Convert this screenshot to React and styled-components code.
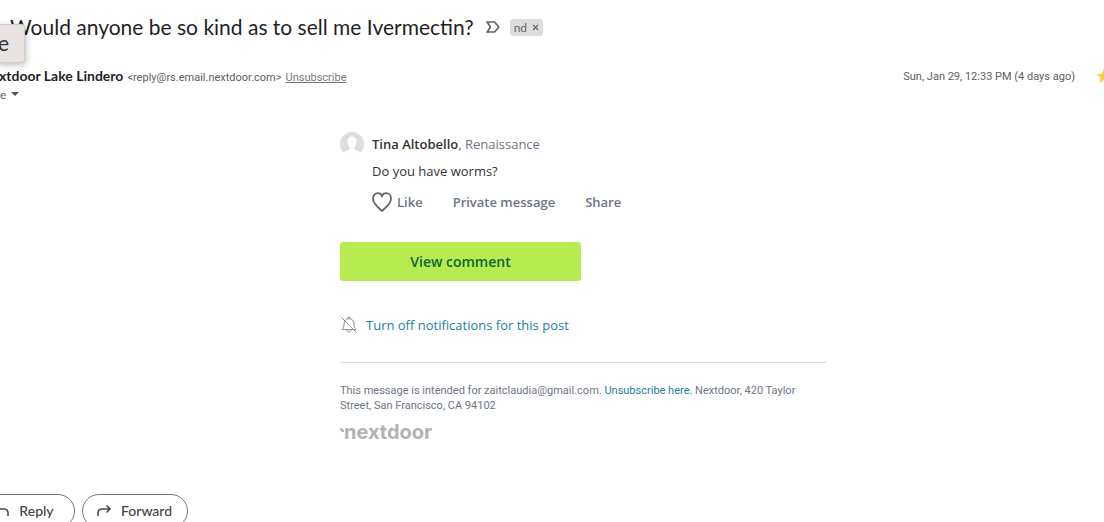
import styled, { createGlobalStyle } from 'styled-components'

const App = () => {
  return (
    <>
      <GlobalStyle />
      <Page>
        <Tooltip role="tooltip">e</Tooltip>
        <SubjectRow>
          <Subject>Would anyone be so kind as to sell me Ivermectin?</Subject>
          <ImportantMarker aria-label="Important">
            <svg width="14" height="12" viewBox="0 0 14 12" fill="none">
              <path
                d="M1.2 1H8.6L12.8 6L8.6 11H1.2L4.4 6Z"
                stroke="#666"
                strokeWidth="1.7"
              />
            </svg>
          </ImportantMarker>
          <Label>
            nd
            <RemoveLabel aria-label="Remove label">
              <svg width="7" height="7" viewBox="0 0 7 7">
                <path d="M1 1L6 6M6 1L1 6" stroke="#666" strokeWidth="1.2" />
              </svg>
            </RemoveLabel>
          </Label>
        </SubjectRow>

        <SenderRow>
          <Sender>
            <SenderName>Nextdoor Lake Lindero</SenderName>
            <Address>&lt;reply@rs.email.nextdoor.com&gt;</Address>
            <HeaderLink href="#unsubscribe">Unsubscribe</HeaderLink>
          </Sender>
          <SentAt>Sun, Jan 29, 12:33 PM (4 days ago)</SentAt>
          <Star aria-label="Starred">
            <svg width="16" height="16" viewBox="0 0 16 16">
              <path
                d="M8 0.8L10.2 5.7L15.5 6.2L11.5 9.7L12.7 15L8 12.2L3.3 15L4.5 9.7L0.5 6.2L5.8 5.7Z"
                fill="#f7cb4d"
              />
            </svg>
          </Star>
        </SenderRow>
        <Recipient>
          to me
          <svg width="8" height="4" viewBox="0 0 8 4">
            <path d="M0 0H8L4 4Z" fill="#555" />
          </svg>
        </Recipient>

        <MailArea>
          <Mail>
            <Comment>
              <Avatar />
              <div>
                <Author>
                  <b>Tina Altobello</b>, Renaissance
                </Author>
                <CommentText>Do you have worms?</CommentText>
                <Actions>
                  <Action href="#like">
                    <Heart />
                    Like
                  </Action>
                  <Action href="#message">Private message</Action>
                  <Action href="#share">Share</Action>
                </Actions>
              </div>
            </Comment>

            <ViewButton>View comment</ViewButton>

            <MuteLink href="#mute">
              <BellOff />
              Turn off notifications for this post
            </MuteLink>

            <Footer>
              <p>
                This message is intended for zaitclaudia@gmail.com.{' '}
                <FooterLink href="#unsubscribe">Unsubscribe here.</FooterLink>{' '}
                Nextdoor, 420 Taylor Street, San Francisco, CA 94102
              </p>
              <Wordmark>
                <svg width="4" height="24" viewBox="0 0 4 24">
                  <path d="M0.5 8.5Q1.5 11 5 11.5" fill="none" stroke="#b2b2b2" strokeWidth="2.4" />
                </svg>
                nextdoor
              </Wordmark>
            </Footer>
          </Mail>
        </MailArea>

        <Replies>
          <PillButton>
            <svg width="16" height="14" viewBox="0 0 16 14" fill="none">
              <path
                d="M5.5 2.5L2 6L5.5 9.5M2 6H10Q14 6 14 10V13"
                stroke="#444"
                strokeWidth="1.5"
              />
            </svg>
            Reply
          </PillButton>
          <PillButton>
            <svg width="16" height="14" viewBox="0 0 16 14" fill="none">
              <path
                d="M10.5 2.5L14 6L10.5 9.5M14 6H6Q2 6 2 10V13"
                stroke="#444"
                strokeWidth="1.5"
              />
            </svg>
            Forward
          </PillButton>
        </Replies>
      </Page>
    </>
  )
}

const Avatar = () => (
  <svg width="24" height="24" viewBox="0 0 24 24">
    <clipPath id="avatar">
      <circle cx="12" cy="12" r="12" />
    </clipPath>
    <g clipPath="url(#avatar)">
      <rect width="24" height="24" fill="#dedede" />
      <path
        d="M12 4.5C8.8 4.5 7.4 6.6 7.4 9.4C7.4 12.2 8.4 14.2 9.6 15.2V17.2C8.6 18.6 5 18.6 3.4 20.6V24H20.6V20.6C19 18.6 15.4 18.6 14.4 17.2V15.2C15.6 14.2 16.6 12.2 16.6 9.4C16.6 6.6 15.2 4.5 12 4.5Z"
        fill="#fff"
      />
    </g>
  </svg>
)

const Heart = () => (
  <svg width="20" height="20" viewBox="0 0 20 20" fill="none">
    <path
      d="M10 19C8.5 17.3 1 12.3 1 6.5C1 3.3 3.2 1.2 5.8 1.2C7.8 1.2 9.2 2.4 10 4C10.8 2.4 12.2 1.2 14.2 1.2C16.8 1.2 19 3.3 19 6.5C19 12.3 11.5 17.3 10 19Z"
      stroke="#666"
      strokeWidth="1.8"
    />
  </svg>
)

const BellOff = () => (
  <svg width="18" height="18" viewBox="0 0 18 18" fill="none">
    <path
      d="M2 13.5H16C14.6 12 14 11 14 8C14 5 12 2.6 9 2.6C6 2.6 4 5 4 8C4 11 3.4 12 2 13.5ZM8 2.4V1.2H10V2.4M7 14C7.2 16.6 10.8 16.6 11 14M1.5 1.5L16.5 16.5"
      stroke="#8a8f98"
      strokeWidth="1"
    />
  </svg>
)

const GlobalStyle = createGlobalStyle`
  body {
    margin: 0;
    background: #fff;
    overflow: hidden;
    font-family: Lato, sans-serif;
  }
  * {
    box-sizing: border-box;
  }
  svg {
    display: block;
    flex-shrink: 0;
  }
`

const Page = styled.main`
  position: relative;
  padding-top: 11px;
  overflow: hidden;
`

const Tooltip = styled.div`
  position: absolute;
  top: 24px;
  left: -4px;
  width: 29px;
  height: 39px;
  padding-left: 1px;
  border: 1px solid #d2cdcb;
  border-radius: 3px;
  background: #e8e3e1;
  box-shadow: 1px 2px 6px rgba(0, 0, 0, 0.25);
  color: #333;
  font-size: 21px;
  line-height: 35px;
`

const SubjectRow = styled.header`
  display: flex;
  align-items: center;
  height: 32px;
  padding-left: 10px;
`

const Subject = styled.h1`
  margin: 0 12px 0 0;
  color: #1f1f1f;
  font-size: 21px;
  font-weight: 400;
  line-height: 32px;
`

const ImportantMarker = styled.button`
  margin-right: 10px;
  padding: 0;
  border: 0;
  background: none;
`

const Label = styled.span`
  display: flex;
  align-items: center;
  gap: 5px;
  height: 17px;
  padding: 0 4px;
  border-radius: 3px;
  background: #ddd;
  color: #666;
  font-size: 12px;
`

const RemoveLabel = styled.button`
  padding: 0;
  border: 0;
  background: none;
`

const SenderRow = styled.div`
  display: flex;
  align-items: center;
  height: 20px;
  margin: 23px -8px 0 -19px;
`

const Sender = styled.div`
  display: flex;
  align-items: baseline;
  flex: 1;
  gap: 4px;
  color: #5e5e5e;
`

const SenderName = styled.b`
  color: #1f1f1f;
  font-size: 14px;
  font-weight: 700;
  line-height: 18px;
`

const Address = styled.span`
  font-family: Roboto, sans-serif;
  font-size: 11px;
`

const HeaderLink = styled.a`
  color: #777;
  font-family: Roboto, sans-serif;
  font-size: 11px;
`

const SentAt = styled.time`
  color: #5e5e5e;
  font-family: Roboto, sans-serif;
  font-size: 11px;
`

const Star = styled.button`
  margin-left: 21px;
  padding: 0;
  border: 0;
  background: none;
`

const Recipient = styled.div`
  display: flex;
  align-items: center;
  gap: 5px;
  height: 16px;
  margin-left: -24px;
  color: #5e5e5e;
  font-size: 12px;
`

const MailArea = styled.div`
  padding: 30px 0 0 62px;
  font-family: 'Open Sans', sans-serif;
`

const Mail = styled.article`
  max-width: 486px;
  margin: 0 auto;
`

const Comment = styled.section`
  display: flex;
  gap: 8px;
  color: #333;
  font-size: 13px;
`

const Author = styled.div`
  color: #6c7684;
  line-height: 24px;

  b {
    color: #333;
    font-weight: 600;
  }
`

const CommentText = styled.p`
  margin: 3px 0 9px;
  line-height: 24px;
`

const Actions = styled.div`
  display: flex;
  gap: 30px;
`

const Action = styled.a`
  display: flex;
  align-items: center;
  gap: 5px;
  color: #6c7684;
  font-weight: 600;
  line-height: 20px;
  text-decoration: none;
`

const ViewButton = styled.button`
  display: block;
  width: 241px;
  height: 39px;
  margin-top: 30px;
  border: 0;
  border-radius: 3px;
  background: #b8eb50;
  color: #0a6836;
  font-family: inherit;
  font-size: 14px;
  font-weight: 600;
`

const MuteLink = styled.a`
  display: flex;
  align-items: center;
  gap: 8px;
  margin-top: 34px;
  color: #1c7fa3;
  font-size: 13px;
  line-height: 20px;
  text-decoration: none;
`

const Footer = styled.footer`
  margin-top: 27px;
  padding-top: 20px;
  border-top: 1px solid #ddd;
  color: #6c7684;
  font-family: Roboto, sans-serif;
  font-size: 11px;
  line-height: 15px;

  p {
    margin: 0;
  }
`

const FooterLink = styled.a`
  color: #1c7fa3;
  text-decoration: none;
`

const Wordmark = styled.div`
  display: flex;
  margin-top: 7px;
  color: #b2b2b2;
  font-family: Inter, sans-serif;
  font-size: 20px;
  font-weight: 700;
  line-height: 24px;
`

const Replies = styled.div`
  display: flex;
  gap: 7px;
  margin: 50px 0 0 -25px;
`

const PillButton = styled.button`
  display: flex;
  align-items: center;
  justify-content: center;
  gap: 9px;
  min-width: 100px;
  height: 34px;
  padding: 0 15px 2px 13px;
  border: 1px solid #777;
  border-radius: 17px;
  background: #fff;
  color: #444;
  font-family: inherit;
  font-size: 14px;
  font-weight: 500;
`

export default App
